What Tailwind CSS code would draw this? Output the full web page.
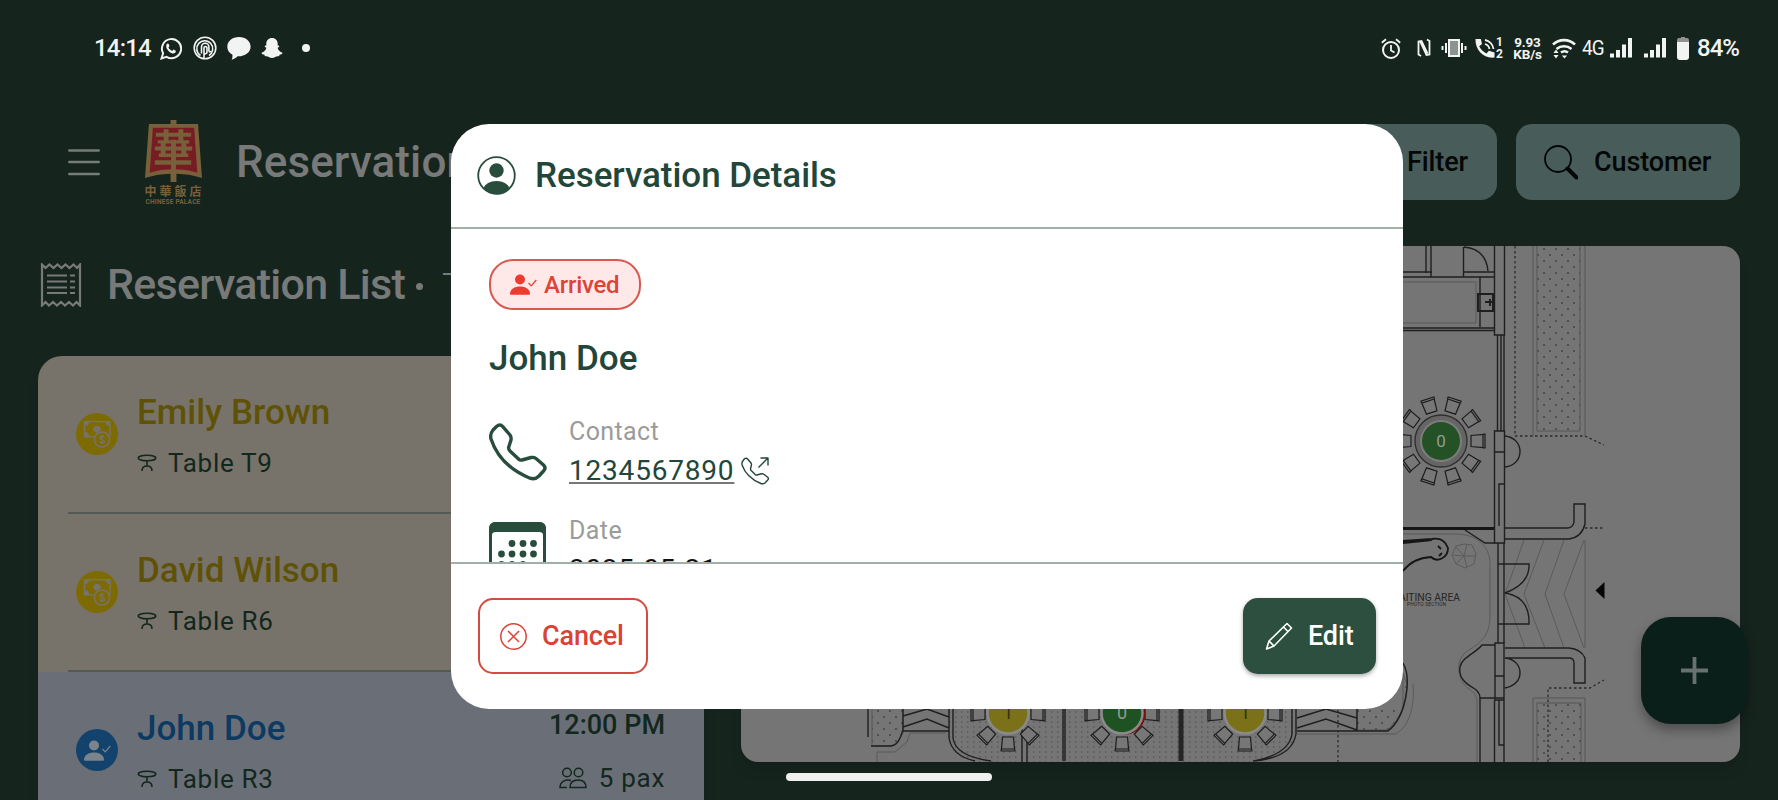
<!DOCTYPE html>
<html lang="en">
<head>
    <meta charset="UTF-8">
    <meta name="viewport" content="width=device-width, initial-scale=1.0">
    <title>Reservation</title>
    <script src="https://cdn.jsdelivr.net/npm/@tailwindcss/browser@4"></script>
</head>
<body class="bg-[#16241e] w-[1778px] h-[800px] overflow-hidden relative font-['Roboto','Noto_Sans_CJK_TC',sans-serif]">

<!-- Shared icons -->
<svg class="hidden">
    <symbol id="icon-table" viewBox="0 0 20 18">
        <g fill="none" stroke="currentColor" stroke-width="1.600">
            <ellipse cx="10" cy="4" rx="8.800" ry="2.800"/>
            <path d="M10 7v5M5 17c0-3.500 1.500-5 5-5s5 1.500 5 5"/>
        </g>
    </symbol>
    <symbol id="icon-cash" viewBox="0 0 42 42">
        <circle cx="21" cy="21" r="21" fill="#7d6b02"/>
        <rect x="8.500" y="8.700" width="25.500" height="15" fill="none" stroke="#77736a" stroke-width="1.500"/>
        <path d="M9 9h4a4 4 0 0 1-4 4zM33.500 9h-4a4 4 0 0 0 4 4zM9 24v-5a4 4 0 0 1 4 4v1zM17 17a4 4 0 0 1 8 0l-4 4z" fill="#77736a"/>
        <circle cx="26" cy="26.500" r="8.800" fill="#7d6b02"/>
        <circle cx="26" cy="26.500" r="7.600" fill="none" stroke="#77736a" stroke-width="1.500"/>
        <path d="M28.300 24.500c-.4-1-1.200-1.400-2.300-1.400-1.400 0-2.300.7-2.300 1.700 0 2.300 4.700 1.100 4.700 3.500 0 1-1 1.700-2.400 1.700s-2.300-.6-2.600-1.700M26 22v9" fill="none" stroke="#77736a" stroke-width="1.200"/>
    </symbol>
    <symbol id="icon-person-check" viewBox="0 0 27 21">
        <circle cx="10" cy="5.500" r="5" fill="currentColor"/>
        <path d="M0 20c0-5 4.500-7.500 10-7.500S20 15 20 20q0 .8-1 .8H1Q0 20.800 0 20z" fill="currentColor"/>
        <path d="M18.500 9l2.700 2.800L26.300 6" fill="none" stroke="currentColor" stroke-width="1.200"/>
    </symbol>
    <symbol id="chair" viewBox="-8 -8 16 16" overflow="visible">
        <path d="M-6-5.500L6-6.500V6.500L-6 5.500zM6-6.800h2V6.800H6" fill="#777" stroke="#1d1d1d" stroke-width="1.200"/>
    </symbol>
    <symbol id="signal" viewBox="0 0 22 20">
        <path d="M0 15.500h4V19.500H0zM6 12h4v7.500H6zM12 6.500h4v13h-4zM18 0h4v19.500h-4z" fill="currentColor"/>
    </symbol>
</svg>

<!-- Status bar -->
<div class="h-[96px] pl-[94px] pr-[39px] flex items-center justify-between text-[#f2f4f3]">
    <div class="flex items-center h-6">
        <span class="text-[24px] leading-none font-medium w-[66px] tracking-[-0.800px]">14:14</span>
        <svg class="w-[22px] h-[23px]" viewBox="0 0 22 23" fill="none" stroke="currentColor" stroke-width="2">
            <path d="M1.500 21.500l1.600-5.300A9.600 9.600 0 1 1 6.500 19.800z"/>
            <path d="M6.500 7.500c.8-1.600 2-1 2.200-.4l.8 2-1 1.300c.8 1.700 2 2.700 3.700 3.500l1.200-1.400 2.400 1.200c.4 2.200-1.800 3-3.200 2.700-3.500-.8-7.500-5-6.100-8.900z" fill="currentColor" stroke="none"/>
        </svg>
        <svg class="w-[24px] h-[24px] ml-[11px]" viewBox="0 0 24 24" fill="none" stroke="currentColor" stroke-width="1.600">
            <circle cx="12" cy="12" r="10.800"/>
            <path d="M7.500 19.500A8 8 0 1 1 16 19.500"/>
            <path d="M8.500 17.500V11a3.700 3.700 0 0 1 7.400 0v4M11 22v-10a1.500 1.500 0 0 1 3 0v4c0 2-1 2-2.500 2M16 14.500c0 2 1.500 1.500 2 .5"/>
        </svg>
        <svg class="w-[24px] h-[23px] ml-[10px]" viewBox="0 0 24 23" fill="currentColor">
            <path d="M12 0C5.300 0 .3 4.200.3 9.700c0 3.400 2 6.300 5.200 8 .1 1.900-.2 3.500-.8 5 2.500-.6 4.600-1.800 6-3.400 7.300.2 12.900-4 12.900-9.600C23.600 4.200 18.700 0 12 0z"/>
        </svg>
        <svg class="w-[22px] h-[22px] ml-[10px]" viewBox="0 0 22 22" fill="currentColor">
            <path d="M11 1C7.500 1 5.300 3.500 5.300 6.800v1.700c-1.400-.4-2.300.9-.9 1.700l1 .6c-.6 2.300-2.300 4.200-4.900 5 .1 1.400 1.300 1.700 3 1.900.1.900.2 1.400.8 1.500 1.200 0 2.300-.2 3.500.9 2 1.300 4.400 1.300 6.400 0 1.200-1.100 2.300-.9 3.500-.9.600-.1.700-.6.800-1.500 1.700-.2 2.900-.5 3-1.900-2.600-.8-4.300-2.700-4.900-5l1-.6c1.400-.8.500-2.100-.9-1.700V6.800C16.700 3.500 14.500 1 11 1z"/>
        </svg>
        <span class="size-[8px] rounded-full bg-current ml-[19px]"></span>
    </div>
    <div class="flex items-center h-6">
        <svg class="w-[20px] h-[21px]" viewBox="0 0 20 21" fill="none" stroke="currentColor" stroke-width="2">
            <circle cx="10" cy="12" r="8"/>
            <path d="M10 7v5.500l3.500 2M.8 4.800L5 1.300M19.200 4.800L15 1.300" stroke-width="1.800"/>
        </svg>
        <svg class="w-[14px] h-[20px] ml-[16px]" viewBox="0 0 14 20" fill="none" stroke="currentColor" stroke-width="1.800">
            <path d="M4 18L1.500 16.500V3.500l3-.5 6 12.500M10 1.500l2.500 1.500v13.500l-3 .5L3.500 4"/>
        </svg>
        <svg class="w-[26px] h-[20px] ml-[10px]" viewBox="0 0 26 20" fill="none" stroke="currentColor" stroke-width="2">
            <rect x="8" y="2" width="10" height="16" fill="#8c9390"/>
            <path d="M5 5v10M21 5v10M1.500 8v4M24.500 8v4"/>
        </svg>
        <svg class="w-[21px] h-[21px] ml-[8px]" viewBox="0 0 21 21" fill="none" stroke="currentColor" stroke-width="1.800">
            <path d="M1.500 1h4.300l1.200 5-2.800 2.300c1.600 3.200 4 5.500 7.300 7.200l2.400-2.700 5.600 1.600V19.500C9 21 0 12 .5 1z" fill="currentColor" stroke="none"/>
            <path d="M10 2a10.500 10.500 0 0 1 8.500 9M10 6a6.500 6.500 0 0 1 4.500 5"/>
        </svg>
        <span class="w-[8px] flex flex-col text-[12px] leading-[12px] font-bold"><span>1</span><span>2</span></span>
        <span class="flex flex-col items-center text-[13.500px] leading-[12.500px] font-bold ml-[9px] w-[29px] tracking-[-0.200px]"><span>9.93</span><span>KB/s</span></span>
        <svg class="w-[24px] h-[21px] ml-[10px]" viewBox="0 0 24 21" fill="none" stroke="currentColor" stroke-width="2.600">
            <path d="M1 6.500a16 16 0 0 1 22 0M4.500 11a11.500 11.500 0 0 1 15 0M9 14.500a6 6 0 0 1 7 0"/>
            <path d="M12.500 20.500l-2.600-3h5.200zM4 11.500l2.500 3.500h-5zM4 20.500L1.500 17h5z" fill="currentColor" stroke="none"/>
        </svg>
        <span class="text-[21px] leading-none ml-[6px] w-[22px] tracking-[-1px] scale-x-90 origin-left">4G</span>
        <svg class="w-[22px] h-[20px] ml-[6px]"><use href="#signal"/></svg>
        <svg class="w-[22px] h-[20px] ml-[12px]"><use href="#signal"/></svg>
        <svg class="w-[12px] h-[23px] ml-[11px]" viewBox="0 0 12 23">
            <path d="M4 0h4v1h2q2 0 2 2v2H0V3q0-2 2-2h2z" fill="#8c9390"/>
            <path d="M0 5h12v15q0 3-3 3H3q-3 0-3-3z" fill="currentColor"/>
        </svg>
        <span class="text-[24px] leading-none font-medium ml-[8px] w-[42px] tracking-[-1px]">84%</span>
    </div>
</div>

<!-- App header -->
<header class="h-[132px] pl-[68px] pr-[38px] flex items-center justify-between">
    <div class="flex items-center">
        <svg class="w-[32px] h-[27px]" viewBox="0 0 32 27" stroke="#767b79" stroke-width="2.600" stroke-linecap="round">
            <path d="M1.300 1.500h29.400M1.300 13h29.400M1.300 25h29.400"/>
        </svg>
        <div class="w-[58px] ml-[44px] mt-[1px] flex flex-col items-center">
            <svg class="w-[57px] h-[62px]" viewBox="0 0 58 63" preserveAspectRatio="none">
                <path d="M26 0h6v4h22l4 55q-11-4-26-4.500V63h-6v-8.500Q11 55 0 59L4 4h22z" fill="#77603a"/>
                <path d="M8 8h42l3.200 45.500Q42 50 29 50T4.800 53.500z" fill="#771c22"/>
                <path d="M11 13h36v4H11zM13 20.500h32v3.500H13zM10 27h38v4H10zM14 34h30v3.500H14zM10 41h37v4.500H10zM19 9.500h5V22h-5zM34 9.500h5V22h-5zM26.500 20h5v31h-5zM16 24h5v12h-5zM37 24h5v12h-5z" fill="#77603a"/>
            </svg>
            <span class="text-[12px] leading-[14px] mt-[3px] font-bold text-[#77603a] tracking-[3px] -mr-[3px] whitespace-nowrap">中華飯店</span>
            <span class="text-[6.500px] leading-[7px] font-bold text-[#77603a] whitespace-nowrap tracking-[0.200px]">CHINESE PALACE</span>
        </div>
        <h1 class="ml-[34px] text-[44px] leading-none font-medium text-[#777a79] tracking-[0.100px]">Reservation</h1>
    </div>
    <div class="flex gap-[19px] text-[27px] tracking-[-0.100px] font-medium text-[#030706]">
        <button class="h-[76px] w-[190px] rounded-[16px] bg-[#485c59] flex items-center justify-end pr-[29px]">Filter</button>
        <button class="h-[76px] w-[224px] rounded-[16px] bg-[#485c59] flex items-center pl-[28px]">
            <svg class="w-[34px] h-[35px]" viewBox="0 0 34 35" fill="none" stroke="currentColor">
                <circle cx="14" cy="14" r="13" stroke-width="1.800"/>
                <path d="M23.500 23.500l9 9" stroke-width="4" stroke-linecap="round"/>
            </svg>
            <span class="ml-[16px]">Customer</span>
        </button>
    </div>
</header>

<main class="flex pl-[38px] pr-[38px] pt-[18px]">
    <!-- Reservation list -->
    <section class="w-[666px]">
        <div class="flex items-center h-[78px] pl-[2px] text-[#777a79]">
            <svg class="w-[42px] h-[44px]" viewBox="0 0 42 44" fill="none" stroke="currentColor" stroke-width="2.200">
                <path d="M2 1.500l3.500 3.500 4-3.500 4 3.500 4-3.500 4 3.500 4-3.500 4 3.500 4-3.500 3.500 3.500L40 1.500v41L36.500 39 33 42.500 29 39l-4 3.500-4-3.500-4 3.500-4-3.500-4 3.500L5.500 39 2 42.500z"/>
                <path d="M7 12.500h20M7 18.500h20M7 24.500h20M7 30h20M30 12.500h5M30 18.500h5M30 24.500h5M30 30h5"/>
            </svg>
            <h2 class="ml-[25px] -mt-[2px] text-[43px] leading-none font-medium whitespace-nowrap tracking-[-0.750px]">Reservation List</h2>
            <span class="size-[7px] rounded-full bg-current ml-[11px] mt-[2px] shrink-0"></span>
            <span class="ml-[19px] text-[36px] leading-none mt-[4px] font-light">Today</span>
        </div>
        <div class="mt-[32px] rounded-t-[24px] overflow-hidden shadow-lg text-[#13271d]">
            <div class="h-[158px] bg-[#77736a] relative flex items-center pl-[38px]">
                <svg class="size-[42px] -mt-[2px]"><use href="#icon-cash"/></svg>
                <div class="ml-[19px]">
                    <div class="text-[35px] leading-[44px] font-medium text-[#5f5206]">Emily Brown</div>
                    <div class="flex items-center mt-[12px] text-[26px] leading-[32px] tracking-[0.700px]"><svg class="w-[20px] h-[18px] mr-[11px]"><use href="#icon-table"/></svg>Table T9</div>
                </div>
                <div class="absolute left-[30px] right-0 bottom-0 h-[2px] bg-[#535a53]"></div>
            </div>
            <div class="h-[158px] bg-[#77736a] relative flex items-center pl-[38px]">
                <svg class="size-[42px] -mt-[2px]"><use href="#icon-cash"/></svg>
                <div class="ml-[19px]">
                    <div class="text-[35px] leading-[44px] font-medium text-[#5f5206]">David Wilson</div>
                    <div class="flex items-center mt-[12px] text-[26px] leading-[32px] tracking-[0.700px]"><svg class="w-[20px] h-[18px] mr-[11px]"><use href="#icon-table"/></svg>Table R6</div>
                </div>
                <div class="absolute left-[30px] right-0 bottom-0 h-[2px] bg-[#535a53]"></div>
            </div>
            <div class="h-[158px] bg-[#6a6f77] flex items-center pl-[38px] pr-[39px]">
                <span class="size-[42px] -mt-[2px] rounded-full bg-[#13436d] flex items-center justify-center text-[#7b838b]"><svg class="w-[27px] h-[21px]"><use href="#icon-person-check"/></svg></span>
                <div class="ml-[19px]">
                    <div class="text-[35px] leading-[44px] font-medium text-[#0d3a62]">John Doe</div>
                    <div class="flex items-center mt-[12px] text-[26px] leading-[32px] tracking-[0.700px]"><svg class="w-[20px] h-[18px] mr-[11px]"><use href="#icon-table"/></svg>Table R3</div>
                </div>
                <div class="ml-auto pb-[2px] flex flex-col items-end">
                    <div class="text-[27px] leading-[38px] font-medium">12:00 PM</div>
                    <div class="flex items-center mt-[18px] text-[26px] leading-[32px] tracking-[0.700px]">
                        <svg class="w-[28px] h-[22px] mr-[12px]" viewBox="0 0 28 22" fill="none" stroke="currentColor" stroke-width="1.500">
                            <circle cx="8" cy="5.500" r="4.300"/><circle cx="19.500" cy="5.500" r="4.300"/>
                            <path d="M11 20.500c0-5 3-7.500 8-7.500s8 2.500 8 7.500zM12 13.500C6 12 1 15 1 20.500h7"/>
                        </svg>5 pax</div>
                </div>
            </div>
        </div>
    </section>

    <!-- Floor plan -->
    <section class="ml-[37px] h-[516px] w-[999px] rounded-[17px] bg-[#757575] overflow-hidden shadow-lg">
        <svg class="w-full h-full" viewBox="741 246 999 516">
            <defs>
                <pattern id="dots" width="12" height="12" patternUnits="userSpaceOnUse"><path d="M1 3h2M7 9h2" stroke="#444" stroke-width="1.300"/></pattern>
                <pattern id="fine-dots" width="6" height="5" patternUnits="userSpaceOnUse"><path d="M1 2h1.500" stroke="#4a4a4a"/></pattern>
            </defs>
            <!-- planters -->
            <g fill="url(#dots)" stroke="#565656">
                <path d="M1537 240v191h43V240M1537 770v-67h44v67M872 700v46h20q4 0 6-4l5-9v-33M1357 700v30h31q19-18 19-45l-4-12v36"/>
                <path d="M1533 240v196M1585 240v196M1533 770v-72h52v72" fill="none"/>
            </g>
            <path d="M949 700v38q2 20 26 24h278q38-6 43-28V700z" fill="url(#fine-dots)"/>
            <!-- thin outlines -->
            <g fill="none" stroke="#5b5b5b">
                <path d="M1403 282h73v41h-73M1403 534h52c22 0 35 12 35 30v52c0 22-12 28-24 36-12 10-8 30 3 37q8 5 8 12v61M1585 540v108M877 762v-10h18l12-10 3-9h36M1297 734h98c14-6 20-28 18-50"/>
                <path d="M1524 540l-19 54 20 54M1544 540l-20 54 21 54M1564 540l-19 54 19 54M1584 540l-20 54 20 54"/>
                <path d="M1464 556l-8-9M1464 556l3-12M1464 556l12 0M1464 556l3 11M1464 556l-8 8M1464 556l-12-1M1456 546l8-2 8 1 4 9-2 10-9 4-9-4-4-9z"/>
            </g>
            <!-- walls -->
            <g fill="none" stroke="#1f1f1f" stroke-width="1.400">
                <path d="M1426 246v27M1431 246v31M1403 272h29M1403 277h91M1463.500 247v30M1463 272h31M1464 247q22 2 24 24M1480 277v50M1403 328h91M1403 330.500h91"/>
                <path d="M1478 294h15v17h-15zM1485 302h9M1490 299v7" stroke-width="2"/>
                <path d="M1494.500 246v89h10v-89M1497.500 335v96M1501 335v96M1504 335v96M1494.500 431h10v112h-10zM1494 452h10M1499 526v-42h5"/>
                <path d="M1505 436c20 2 20 29 0 31M1505 528h62q6 0 7-6v-18h11v20q-3 13-16 15h-64"/>
                <path d="M1498 543v100M1504 543v100M1498 564h31q1 20-24 29 25 4 24 31h-31M1465 530l20 13h10"/>
                <path d="M1495 643h9v57h-9zM1495 676h9M1505 648h64q12 1 16 10v25h-11v-20q0-5-5-5h-64M1505 658c20 2 20 27 0 30M1495 645h-13c-6 8-20 12-22 22-2 12 8 18 15 22q5 4 5 9h24M1480 698v64M1494.500 700v62M1499 700v45h5v17M1504 700v45"/>
                <path d="M868 700v37M871 746h20q6-1 9-8l3-8v-30M903 731h46M903 727l24-8 22 9M903 716l24-7 22 8M949 700v38q3 18 26 23M953 700v38q2 18 38 23M1296 700v34q-4 24-43 27M1292 700v34q-3 20-38 27M1297 731h91c18-14 24-52 15-68M1297 718l29-9 31 9M1297 728l29-9 31 11M1357 700v30M1063 700v61M1065 700v61M1022 728v34M1027 728v34"/>
            </g>
            <path d="M1181 700v61" stroke="#252525" stroke-width="5"/>
            <path d="M1403 528.500h91" stroke="#161616" stroke-width="3"/>
            <path d="M1403 543l29-3M1403 541l29-2q12-2 16 9c0 10-11 15-17 9q-18 1-28 14M1438 546l3 3M1442 553l-3 3" fill="none" stroke="#161616" stroke-width="1.800"/>
            <g fill="none" stroke="#2b2b2b" stroke-width="1.300" stroke-dasharray="2.500 2.500">
                <path d="M1515 246v190h70l19 9M1585 528h19M1548 762v-74h42l14-8M1338 700v62"/>
            </g>
            <path d="M1604.500 582v17l-9-8.500z" fill="#050505"/>
            <text x="1390" y="600.500" font-size="10.500" fill="#262626" textLength="70" lengthAdjust="spacingAndGlyphs">WAITING AREA</text>
            <text x="1407" y="606" font-size="5" fill="#262626" textLength="39">PHOTO SECTION</text>

            <!-- round table -->
            <g transform="translate(1441 441)">
                <use href="#chair" x="28" y="-8" width="16" height="16"/>
                <use href="#chair" x="28" y="-8" width="16" height="16" transform="rotate(36)"/>
                <use href="#chair" x="28" y="-8" width="16" height="16" transform="rotate(72)"/>
                <use href="#chair" x="28" y="-8" width="16" height="16" transform="rotate(108)"/>
                <use href="#chair" x="28" y="-8" width="16" height="16" transform="rotate(144)"/>
                <use href="#chair" x="28" y="-8" width="16" height="16" transform="rotate(180)"/>
                <use href="#chair" x="28" y="-8" width="16" height="16" transform="rotate(216)"/>
                <use href="#chair" x="28" y="-8" width="16" height="16" transform="rotate(252)"/>
                <use href="#chair" x="28" y="-8" width="16" height="16" transform="rotate(288)"/>
                <use href="#chair" x="28" y="-8" width="16" height="16" transform="rotate(324)"/>
                <circle r="26" fill="#656565" stroke="#303030" stroke-width="1.400"/>
                <circle r="21" fill="#7d7d7d"/>
                <circle r="19" fill="#245226"/>
                <text y="5.500" text-anchor="middle" font-size="17" fill="#929c92">0</text>
            </g>
            <!-- booth tables -->
            <g id="booth-seats">
                <use href="#chair" x="1029" y="706" width="16" height="16" transform="rotate(45 1008 714)"/>
                <use href="#chair" x="1029" y="706" width="16" height="16" transform="rotate(90 1008 714)"/>
                <use href="#chair" x="1029" y="706" width="16" height="16" transform="rotate(135 1008 714)"/>
                <use href="#chair" x="1029" y="706" width="16" height="16"/>
                <use href="#chair" x="1029" y="706" width="16" height="16" transform="rotate(180 1008 714)"/>
            </g>
            <use href="#booth-seats" x="114"/>
            <use href="#booth-seats" x="237"/>
            <circle cx="1125" cy="714" r="20.500" fill="#7a1010"/>
            <g stroke="#8a8a8a" stroke-width="2.500">
                <circle cx="1008" cy="713" r="20.500" fill="#7a7119"/>
                <circle cx="1122" cy="713" r="20.500" fill="#1f5222"/>
                <circle cx="1245" cy="713" r="20.500" fill="#7a7119"/>
            </g>
            <g font-size="18" text-anchor="middle">
                <text x="1008" y="719" fill="#37330d">1</text>
                <text x="1122" y="719" fill="#929c92">0</text>
                <text x="1245" y="719" fill="#37330d">1</text>
            </g>
        </svg>
    </section>
</main>

<!-- Add button -->
<button class="absolute left-[1641px] top-[617px] w-[106px] h-[107px] rounded-[30px] bg-[#0a1f19] shadow-[0_6px_12px_rgba(0,0,0,0.35)] flex items-center justify-center">
    <svg class="size-[27px]" viewBox="0 0 27 27" stroke="#68716e" stroke-width="3.800"><path d="M13.500 0v27M0 13.500h27"/></svg>
</button>

<!-- Reservation details -->
<div class="absolute left-[451px] top-[124px] w-[952px] h-[585px] rounded-[38px] bg-white overflow-hidden flex flex-col text-[#23463a]">
    <div class="h-[105px] shrink-0 border-b-2 border-[#a0b0a8] flex items-center pl-[26px]">
        <svg class="size-[39px]" viewBox="0 0 39 39" fill="#294d3d">
            <circle cx="19.500" cy="19.500" r="18.300" fill="none" stroke="#294d3d" stroke-width="1.800"/>
            <circle cx="19.500" cy="14.500" r="7.200"/>
            <path d="M6 32.500q3.500-7.500 13.500-7.500T33 32.500A18.700 18.700 0 0 1 6 32.500z"/>
        </svg>
        <h3 class="ml-[19px] text-[35px] leading-none font-medium tracking-[-0.050px]">Reservation Details</h3>
    </div>
    <div class="flex-1 min-h-0 overflow-hidden pl-[38px] pt-[30px]">
        <div class="w-[152px] h-[51px] rounded-[24px] border-2 border-[#d8594e] bg-[#fee9e8] text-[#dd4336] flex items-center pl-[19px]">
            <svg class="w-[27px] h-[21px] text-[#ee3b30]"><use href="#icon-person-check"/></svg>
            <span class="ml-[7px] text-[24px] leading-none font-medium tracking-[-0.250px]">Arrived</span>
        </div>
        <div class="mt-[27px] text-[35px] leading-[44px] font-medium">John Doe</div>
        <div class="mt-[34px] h-[74px] flex">
            <svg class="w-[58px] h-[58px] mt-[8px]" viewBox="0 0 58 58" fill="none" stroke="#294d3d" stroke-width="3.400" stroke-linejoin="round">
                <path d="M7.500 3.500Q11 .5 14 3.800L21 12Q22.500 14 22 17L19.600 24.500Q19.500 26.500 21 28L29.500 36Q31 37.500 33 37L42 34.500Q45 34 47 35.500L54.500 42Q57.500 45 54.500 48L50 53Q46 57 41 55.200C21 47 8 34 2 16Q.8 11 4 7z"/>
            </svg>
            <div class="ml-[22px]">
                <div class="text-[25px] leading-[34px] text-[#9b9b9b] tracking-[0.400px]">Contact</div>
                <div class="mt-[2px] flex items-center text-[28px] leading-[40px]">
                    <span class="tracking-[0.800px] underline decoration-2 underline-offset-[2px] decoration-[#777]">1234567890</span>
                    <svg class="w-[28px] h-[28px] ml-[7px]" viewBox="0 0 28 28" fill="none" stroke="currentColor" stroke-width="1.400" stroke-linejoin="round">
                        <path d="M3.500 1.800Q5.200.5 6.600 2L10 6q.7 1 .4 2.200L9.500 12q0 1 .7 1.600l4 4q.8.600 1.700.4l4.500-1.200q1.500-.2 2.500.5l3.800 3q1.400 1.300 0 2.700l-2.500 2.700q-2 1.700-4.300.8C10 22.500 4 16.500 1.200 8.300Q.5 5.500 1.800 4zM17.500 10.500L27 1M19.500 1H27v7.500"/>
                    </svg>
                </div>
            </div>
        </div>
        <div class="mt-[25px] flex">
            <svg class="w-[57px] h-[58px] mt-[8px]" viewBox="0 0 57 58" fill="#294d3d">
                <rect x="1.500" y="1.500" width="54" height="55" rx="5" fill="none" stroke="#294d3d" stroke-width="3"/>
                <path d="M0 12V7q0-7 7-7h43q7 0 7 7v5l-3 1q0-3-4-3H7q-4 0-4 3z"/>
                <circle cx="23" cy="21.500" r="3.400"/><circle cx="34" cy="21.500" r="3.400"/><circle cx="44.500" cy="21.500" r="3.400"/>
                <circle cx="12.500" cy="32" r="3.400"/><circle cx="23" cy="32" r="3.400"/><circle cx="34" cy="32" r="3.400"/><circle cx="44.500" cy="32" r="3.400"/>
                <circle cx="12.500" cy="42.500" r="3.400"/><circle cx="23" cy="42.500" r="3.400"/><circle cx="34" cy="42.500" r="3.400"/>
            </svg>
            <div class="ml-[23px]">
                <div class="text-[25px] leading-[34px] text-[#9b9b9b] tracking-[0.400px]">Date</div>
                <div class="mt-[2px] text-[28px] leading-[40px] text-[#111] tracking-[0.700px]">2025-05-21</div>
            </div>
        </div>
    </div>
    <div class="h-[147px] shrink-0 border-t-2 border-[#a0b0a8] flex items-center justify-between pl-[27px] pr-[27px] pb-[1px] text-[27px] tracking-[-0.150px] font-medium">
        <button class="w-[170px] h-[76px] rounded-[15px] border-2 border-[#d54a3e] text-[#d94236] flex items-center pl-[20px]">
            <svg class="size-[27px]" viewBox="0 0 27 27" fill="none" stroke="currentColor" stroke-width="1.500">
                <circle cx="13.500" cy="13.500" r="12.700"/><path d="M8 8l11 11M19 8L8 19"/>
            </svg>
            <span class="ml-[15px]">Cancel</span>
        </button>
        <button class="w-[133px] h-[76px] rounded-[15px] bg-[#2c4f3f] text-white shadow-[0_2px_4px_rgba(0,0,0,0.35)] flex items-center pl-[22px]">
            <svg class="w-[28px] h-[28px]" viewBox="0 0 28 28" fill="none" stroke="currentColor" stroke-width="1.600" stroke-linejoin="round">
                <path d="M22 1.500L26.500 6 9 24 1.500 27 4 19zM18.500 5l4.500 4.500M4 19l5 5"/>
            </svg>
            <span class="ml-[15px]">Edit</span>
        </button>
    </div>
</div>

<!-- Home indicator -->
<div class="absolute left-[786px] top-[773px] w-[206px] h-[8px] rounded-full bg-[#efefef]"></div>

</body>
</html>
